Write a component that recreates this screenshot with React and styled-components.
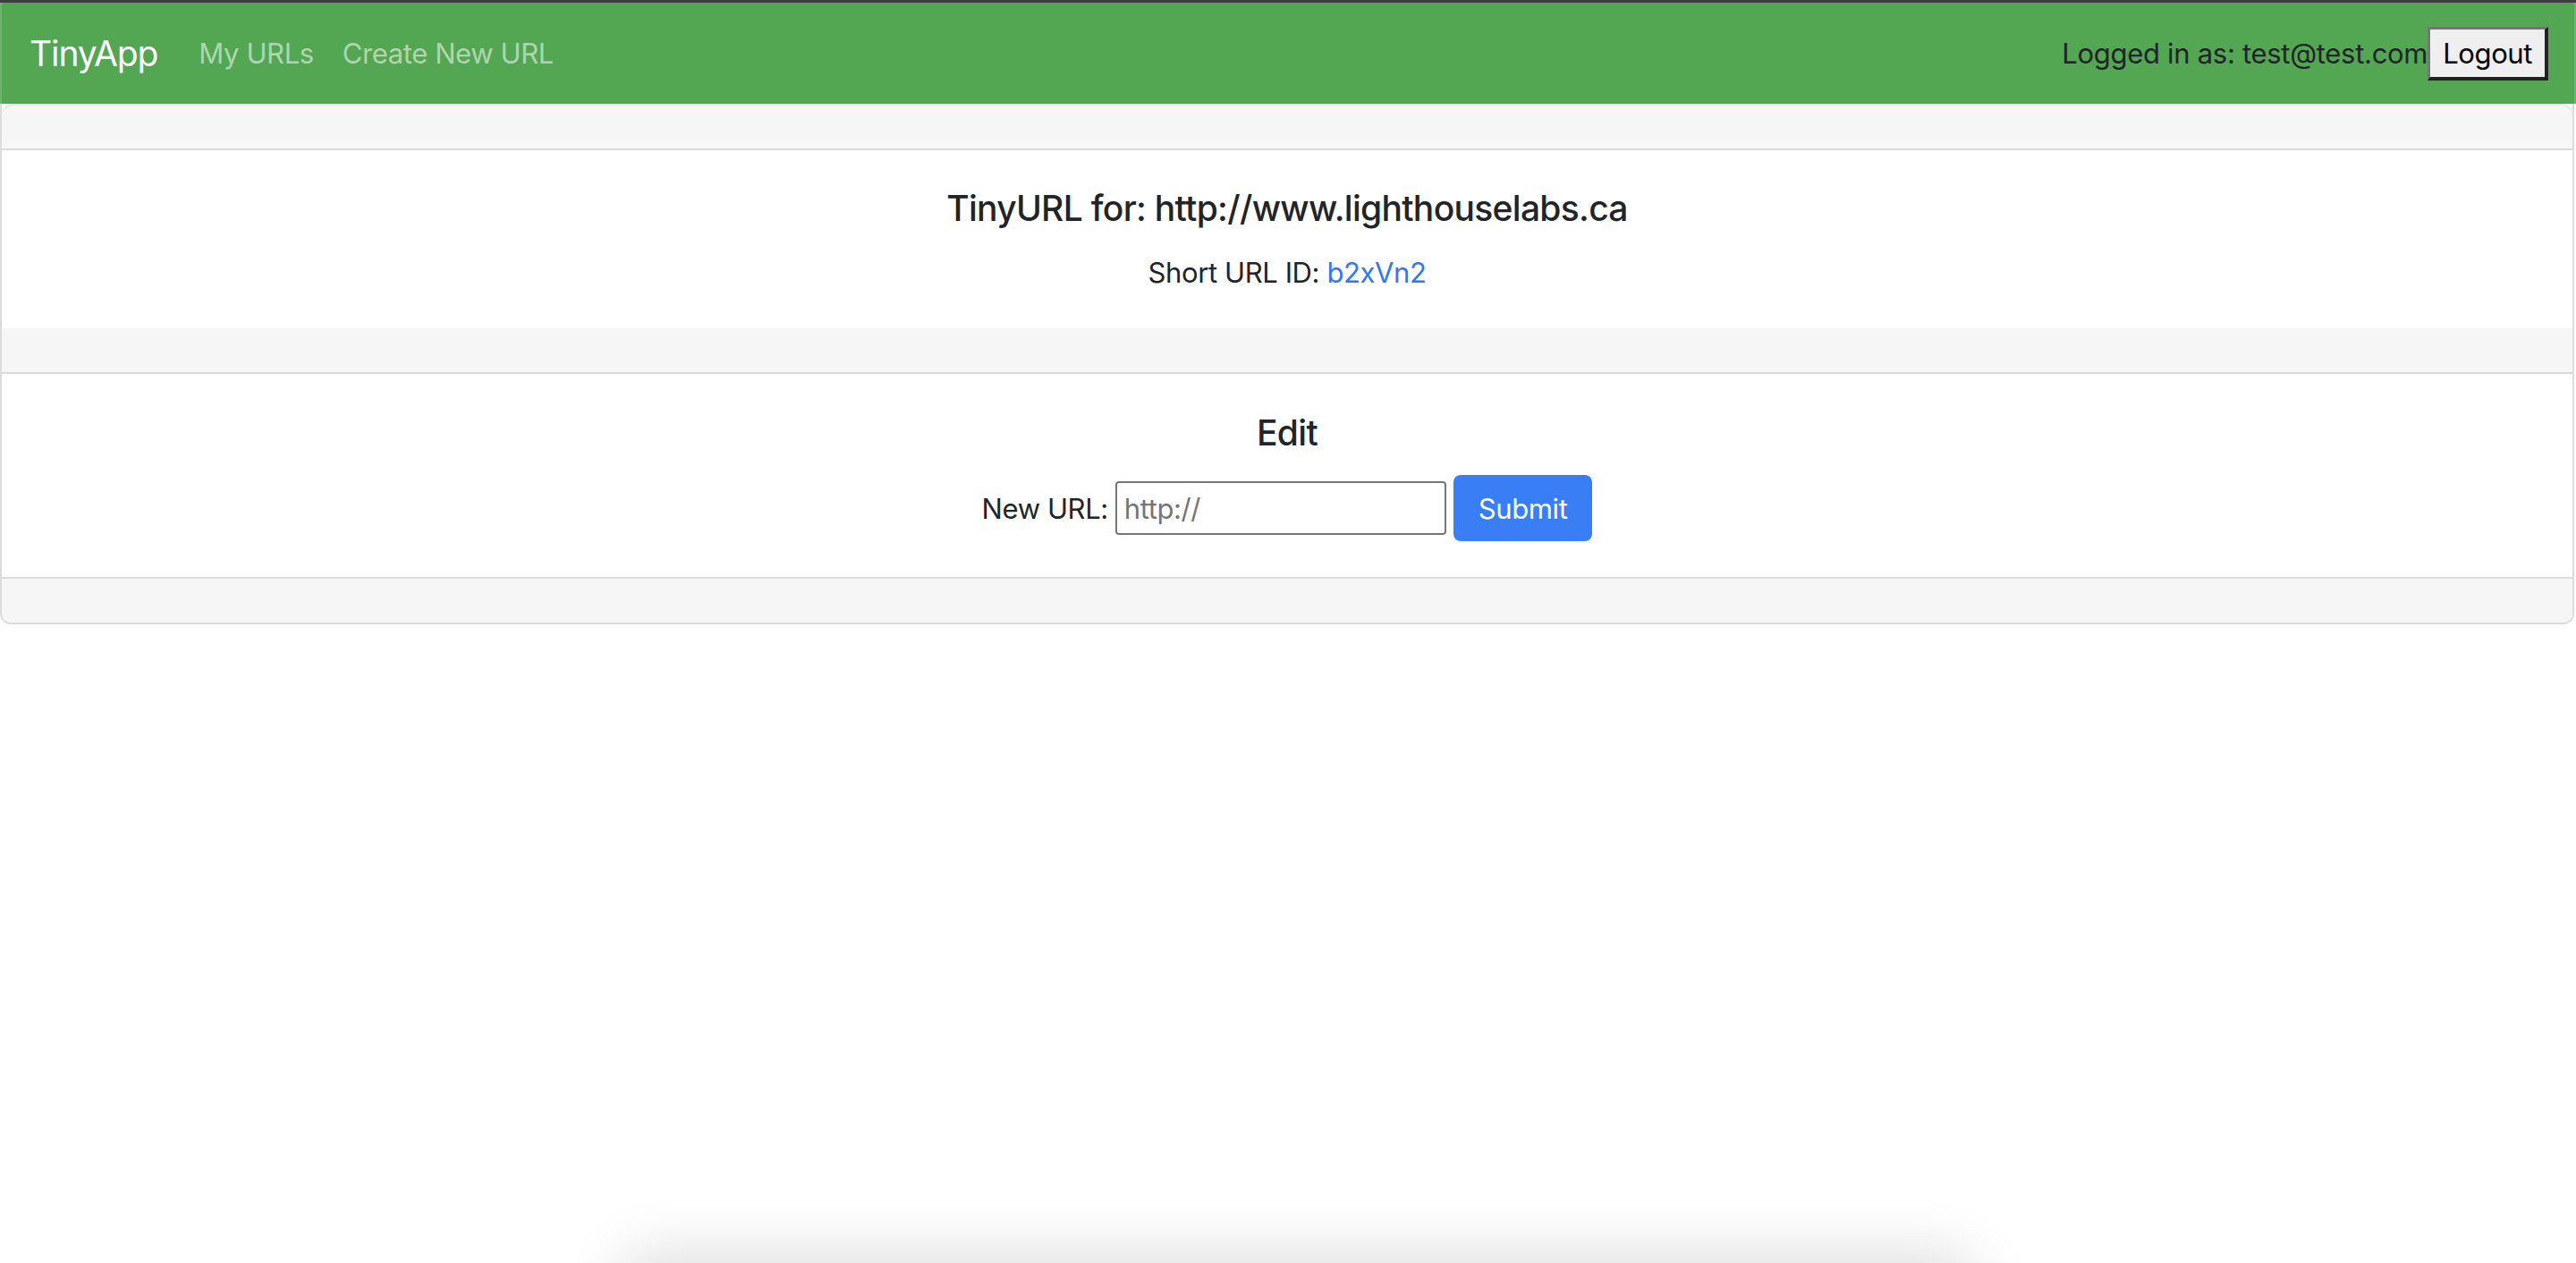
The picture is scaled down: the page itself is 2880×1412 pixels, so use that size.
import React from "react";
import styled, { createGlobalStyle } from "styled-components";

const Global = createGlobalStyle`
  html, body { margin: 0; padding: 0; background: #ffffff; }
  body {
    font-family: Inter, "Noto Sans", "Liberation Sans", sans-serif;
    color: #212529;
    -webkit-font-smoothing: antialiased;
  }
  * { box-sizing: border-box; }
`;

const Window = styled.div`
  min-height: 1412px;
  border-top: 3px solid #3e3e41;
  overflow: hidden;
`;

const Navbar = styled.nav`
  height: 113px;
  display: flex;
  align-items: center;
  padding: 0 31px 0 33px;
  background: #53a652;
  box-shadow: inset 2px 0 0 rgba(255, 255, 255, 0.16), inset -2px 0 0 rgba(255, 255, 255, 0.16);
`;

const Brand = styled.a`
  font-size: 39px;
  color: #ffffff;
  text-decoration: none;
  margin-right: 30px;
  letter-spacing: -1.1px;
`;

const NavLink = styled.a`
  font-size: 31px;
  color: rgba(255, 255, 255, 0.55);
  text-decoration: none;
  padding: 0 16px;
  letter-spacing: -0.4px;
`;

const NavRight = styled.div`
  margin-left: auto;
  display: flex;
  align-items: center;
`;

const UserText = styled.span`
  font-size: 31px;
  color: #212529;
  letter-spacing: -0.3px;
`;

const NativeButton = styled.button`
  height: 60px;
  padding: 0 14px;
  font-family: Inter, "Liberation Sans", sans-serif;
  font-size: 31px;
  color: #000;
  background: #efefef;
  border-style: solid;
  border-width: 3px 4px 4px 3px;
  border-color: #767676 #222 #222 #767676;
  letter-spacing: -0.4px;
`;

const Card = styled.div`
  border: 2px solid #dcdcdc;
  border-top-width: 0;
  border-radius: 0 0 12px 12px;
  overflow: hidden;
  margin-right: 2px;
`;

const CardStrip = styled.div`
  height: ${(p) => p.$h}px;
  background: #f6f6f6;
  border-top: ${(p) => (p.$top ? "2px solid #dadada" : "none")};
  border-bottom: ${(p) => (p.$bottom ? "2px solid #dadada" : "none")};
  ${(p) => (p.$first ? "border-radius: 12px 12px 0 0; box-shadow: inset 0 2px 0 #e6e6e6;" : "")}
`;

const CardBody = styled.div`
  padding: ${(p) => p.$pt}px 0 ${(p) => p.$pb}px;
  text-align: center;
  background: #ffffff;
`;

const Title = styled.h5`
  margin: 0 0 ${(p) => p.$mb}px;
  font-size: 39px;
  font-weight: 500;
  line-height: 48px;
  letter-spacing: -0.7px;
`;

const Text = styled.p`
  margin: 0;
  font-size: 31px;
  line-height: 48px;
  letter-spacing: -0.4px;
`;

const Link = styled.a`
  color: #2f78f5;
  text-decoration: none;
`;

const Form = styled.form`
  display: flex;
  justify-content: center;
  align-items: center;
  gap: 8px;
  font-size: 31px;
  letter-spacing: -0.4px;
`;

const Input = styled.input`
  width: 370px;
  height: 60px;
  padding: 0 8px;
  font-family: Inter, "Liberation Sans", sans-serif;
  font-size: 31px;
  letter-spacing: -0.4px;
  border: 2px solid #767676;
  border-radius: 4px;
  color: #212529;
  &::placeholder { color: #757575; }
`;

const Submit = styled.button`
  height: 74px;
  padding: 0 28px;
  font-family: Inter, "Liberation Sans", sans-serif;
  font-size: 31px;
  letter-spacing: -0.4px;
  color: #ffffff;
  background: #3a7ef6;
  border: none;
  border-radius: 8px;
`;

const DockShadow = styled.div`
  position: fixed;
  left: 700px;
  width: 1500px;
  bottom: -70px;
  height: 70px;
  border-radius: 40px;
  box-shadow: 0 0 70px 10px rgba(0, 0, 0, 0.14);
  pointer-events: none;
`;

export default function App() {
  return (
    <Window>
      <Global />
      <Navbar>
        <Brand href="#">TinyApp</Brand>
        <NavLink href="#">My URLs</NavLink>
        <NavLink href="#">Create New URL</NavLink>
        <NavRight>
          <UserText>Logged in as: test@test.com</UserText>
          <NativeButton type="button">Logout</NativeButton>
        </NavRight>
      </Navbar>
      <Card>
        <CardStrip $h={52} $bottom $first />
        <CardBody $pt={41} $pb={38}>
          <Title $mb={24}>TinyURL for: http://www.lighthouselabs.ca</Title>
          <Text>
            Short URL ID: <Link href="#">b2xVn2</Link>
          </Text>
        </CardBody>
        <CardStrip $h={51} $bottom />
        <CardBody $pt={42} $pb={40}>
          <Title $mb={23}>Edit</Title>
          <Form onSubmit={(e) => e.preventDefault()}>
            <label>New URL:</label>
            <Input type="text" placeholder="http://" />
            <Submit type="submit">Submit</Submit>
          </Form>
        </CardBody>
        <CardStrip $h={51} $top />
      </Card>
      <DockShadow />
    </Window>
  );
}
